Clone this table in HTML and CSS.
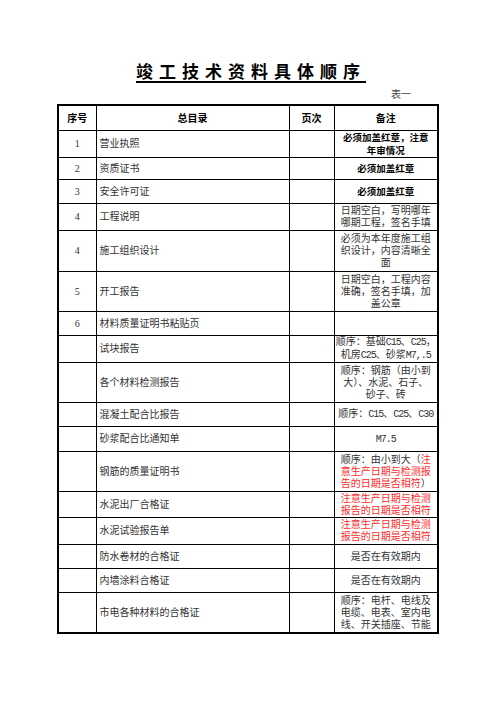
FILE: index.html
```html
<!DOCTYPE html>
<html lang="zh">
<head>
<meta charset="utf-8">
<link rel="stylesheet" href="styles.css">
</head>
<body>
<div class="page">
  <h1 class="title">竣工技术资料具体顺序</h1>
  <div class="tag-row"><span class="tag">表一</span></div>
  <table class="sheet">
    <colgroup>
      <col class="c-no"><col class="c-item"><col class="c-page"><col class="c-note">
    </colgroup>
    <tr class="head">
      <th>序号</th><th>总目录</th><th>页次</th><th>备注</th>
    </tr>
    <tr class="r26">
      <td class="no">1</td><td class="item">营业执照</td><td></td><td class="note strong">必须加盖红章，注意<br>年审情况</td>
    </tr>
    <tr class="r22">
      <td class="no">2</td><td class="item">资质证书</td><td></td><td class="note strong">必须加盖红章</td>
    </tr>
    <tr class="r24">
      <td class="no">3</td><td class="item">安全许可证</td><td></td><td class="note strong">必须加盖红章</td>
    </tr>
    <tr class="r27">
      <td class="no">4</td><td class="item">工程说明</td><td></td><td class="note">日期空白，写明哪年<br>哪期工程，签名手填</td>
    </tr>
    <tr class="r41">
      <td class="no">4</td><td class="item">施工组织设计</td><td></td><td class="note">必须为本年度施工组<br>织设计，内容清晰全<br>面</td>
    </tr>
    <tr class="r40">
      <td class="no">5</td><td class="item">开工报告</td><td></td><td class="note">日期空白，工程内容<br>准确，签名手填，加<br>盖公章</td>
    </tr>
    <tr class="r24">
      <td class="no">6</td><td class="item">材料质量证明书粘贴页</td><td></td><td class="note"></td>
    </tr>
    <tr class="r26">
      <td class="no"></td><td class="item">试块报告</td><td></td><td class="note">顺序：基础<span class="lat">C15</span>、<span class="lat">C25</span>，<br>机房<span class="lat">C25</span>、砂浆<span class="lat">M7,.5</span></td>
    </tr>
    <tr class="r40">
      <td class="no"></td><td class="item">各个材料检测报告</td><td></td><td class="note">顺序：钢筋（由小到<br>大）、水泥、石子、<br>砂子、砖</td>
    </tr>
    <tr class="r24">
      <td class="no"></td><td class="item">混凝土配合比报告</td><td></td><td class="note">顺序：<span class="lat">C15</span>、<span class="lat">C25</span>、<span class="lat">C30</span></td>
    </tr>
    <tr class="r25">
      <td class="no"></td><td class="item">砂浆配合比通知单</td><td></td><td class="note"><span class="lat">M7.5</span></td>
    </tr>
    <tr class="r40">
      <td class="no"></td><td class="item">钢筋的质量证明书</td><td></td><td class="note">顺序：由小到大（<span class="red">注<br>意生产日期与检测报<br>告的日期是否相符</span>）</td>
    </tr>
    <tr class="r26">
      <td class="no"></td><td class="item">水泥出厂合格证</td><td></td><td class="note red">注意生产日期与检测<br>报告的日期是否相符</td>
    </tr>
    <tr class="r27">
      <td class="no"></td><td class="item">水泥试验报告单</td><td></td><td class="note red">注意生产日期与检测<br>报告的日期是否相符</td>
    </tr>
    <tr class="r24">
      <td class="no"></td><td class="item">防水卷材的合格证</td><td></td><td class="note">是否在有效期内</td>
    </tr>
    <tr class="r24">
      <td class="no"></td><td class="item">内墙涂料合格证</td><td></td><td class="note">是否在有效期内</td>
    </tr>
    <tr class="r40">
      <td class="no"></td><td class="item">市电各种材料的合格证</td><td></td><td class="note">顺序：电杆、电线及<br>电缆、电表、室内电<br>线、开关插座、节能</td>
    </tr>
  </table>
</div>
</body>
</html>
```

FILE: styles.css
```css
html, body {
  margin: 0;
  padding: 0;
  background: #ffffff;
}

.page {
  width: 496px;
  padding-top: 61px;
  font-family: "Liberation Serif", "Noto Sans CJK SC", serif;
  color: #333333;
}

.title {
  margin: 0;
  text-align: center;
  font-family: "Noto Sans CJK SC", sans-serif;
  font-size: 17px;
  line-height: 20px;
  font-weight: 700;
  color: #000000;
  letter-spacing: 6px;
  padding-left: 6px;
  text-decoration: underline;
  text-decoration-thickness: 1.5px;
  text-underline-offset: 3px;
}

.tag-row {
  display: flex;
  justify-content: flex-end;
  width: 380px;
  margin: 6px auto 0;
  height: 17px;
}

.tag {
  font-family: "Noto Sans CJK SC", sans-serif;
  font-size: 10px;
  line-height: 14px;
  padding-right: 27px;
  color: #444444;
}

.sheet {
  width: 380px;
  margin: 0 auto;
  border-collapse: collapse;
  table-layout: fixed;
  border: 2px solid #000000;
}

.c-no { width: 38px; }
.c-item { width: 193px; }
.c-page { width: 45px; }
.c-note { width: 104px; }

.sheet th,
.sheet td {
  border: 1px solid #000000;
  padding: 0 3px;
  font-size: 10px;
  line-height: 12px;
  vertical-align: middle;
}

.sheet th {
  font-family: "Noto Sans CJK SC", sans-serif;
  font-weight: 700;
  color: #000000;
  text-align: center;
  height: 24px;
}

.no {
  text-align: center;
}

.item {
  text-align: left;
  padding-left: 4px;
}

.sheet td.note {
  text-align: center;
  padding: 0;
  white-space: nowrap;
}

.sheet td.strong {
  font-family: "Noto Sans CJK SC", sans-serif;
  font-weight: 700;
  font-size: 9.5px;
  line-height: 13px;
  color: #000000;
}

.lat {
  font-family: "Liberation Mono", monospace;
  font-size: 10px;
  letter-spacing: -1px;
}

.red {
  color: #ff2a2a;
}

.r22 td { height: 21px; }
.r24 td { height: 23px; }
.r25 td { height: 24px; }
.r26 td { height: 25px; }
.r27 td { height: 26px; }
.r40 td { height: 39px; }
.r41 td { height: 40px; }
```
